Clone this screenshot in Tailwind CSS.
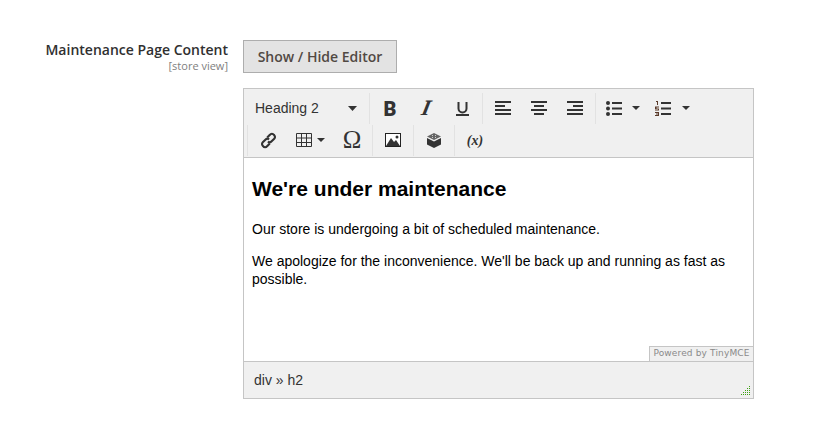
<!DOCTYPE html>
<html><head><meta charset="utf-8">
<script src="https://cdn.jsdelivr.net/npm/@tailwindcss/browser@4"></script>
</head>
<body class="bg-white w-[817px] h-[425px] overflow-hidden font-['Liberation_Sans',sans-serif]">
<div class="flex pt-[40px]">
  <div class="w-[228px] text-right pt-[1px] font-['Open_Sans',sans-serif]">
    <div class="text-[14px] leading-[17px] font-semibold text-[#303030]">Maintenance Page Content</div>
    <div class="mt-[2px] text-[11px] leading-[11px] text-[#808080]">[store view]</div>
  </div>
  <div class="ml-[15px] w-[511px]">
    <button class="block w-[154px] h-[33px] bg-[#e3e3e3] border border-[#adadad] text-[14px] font-semibold text-[#514943] font-['Open_Sans',sans-serif]">Show / Hide Editor</button>
    <div class="mt-[15px] h-[311px] border border-[#c5c5c5] flex flex-col bg-white">
      <div class="h-[69px] bg-[#f0f0f0] border-b border-[#c5c5c5] text-[#333]">
        <div class="h-[35px] pt-[3px] flex items-center">
          <div class="w-[125px] h-[30px] flex items-center justify-between pl-[11px] pr-[12px] text-[14px] text-[#333]"><span>Heading 2</span><svg width="9" height="5"><path d="M0 0h9L4.500 5z" fill="#333"/></svg></div>
          <div class="w-px h-[31px] bg-[#e2e2e2]"></div>
          <div class="flex ml-[2px]">
            <div class="w-[36px] h-[30px] flex items-center justify-center pt-[2px] text-[20px] leading-none font-black font-['Roboto',sans-serif]">B</div>
            <div class="w-[36px] h-[30px] flex items-center justify-center pb-[1px] text-[22px] leading-none font-bold italic font-['Liberation_Serif',serif]"><span class="inline-block -skew-x-12">I</span></div>
            <div class="w-[36px] h-[30px] flex items-center justify-center"><svg class="mt-[1px]" width="13" height="14" fill="none" stroke="#333"><path d="M2.500 0v6.500a4 4 0 0 0 8 0V0" stroke-width="2"/><path d="M0 13h13" stroke-width="2"/></svg></div>
          </div>
          <div class="w-px h-[31px] bg-[#e2e2e2] ml-[2px]"></div>
          <div class="flex ml-[2px]">
            <div class="w-[36px] h-[30px] flex items-center justify-center"><svg width="16" height="14" fill="#333"><path d="M0 0h16v2H0zM0 4h10v2H0zM0 8h16v2H0zM0 12h16v2H0z"/></svg></div>
            <div class="w-[36px] h-[30px] flex items-center justify-center"><svg width="16" height="14" fill="#333"><path d="M0 0h16v2H0zM3 4h10v2H3zM0 8h16v2H0zM3 12h10v2H3z"/></svg></div>
            <div class="w-[36px] h-[30px] flex items-center justify-center"><svg width="16" height="14" fill="#333"><path d="M0 0h16v2H0zM6 4h10v2H6zM0 8h16v2H0zM0 12h16v2H0z"/></svg></div>
          </div>
          <div class="w-px h-[31px] bg-[#e2e2e2] ml-[2px]"></div>
          <div class="flex items-center ml-[10px]">
            <svg width="16" height="15" fill="#333"><circle cx="2" cy="2" r="2"/><circle cx="2" cy="7.500" r="2"/><circle cx="2" cy="13" r="2"/><path d="M6 1h10v2H6zM6 6.500h10v2H6zM6 12h10v2H6z"/></svg>
            <svg class="ml-[10px]" width="8" height="4"><path d="M0 0h8L4 4z" fill="#333"/></svg>
            <svg class="ml-[15px]" width="16" height="15" fill="#333"><path d="M6 1h10v2H6zM6 6.500h10v2H6zM6 12h10v2H6z"/><path d="M1 0h2v4H2V1H1zM0 5.500h4v1H1.500v1H4v2H0v-1h3v-.500H0zM0 11h4v4H0v-1h3v-.500H1v-1h2V12H0z" fill="#5a3a2a"/></svg>
            <svg class="ml-[11px]" width="8" height="4"><path d="M0 0h8L4 4z" fill="#333"/></svg>
          </div>
        </div>
        <div class="h-[33px] pb-[1px] flex items-center pl-[3px]">
          <div class="w-px h-[31px] bg-[#e2e2e2]"></div>
          <div class="w-[38px] ml-[2px] h-[30px] flex items-center justify-center pr-[2px]"><svg width="17" height="17" viewBox="0 0 16 16" fill="none" stroke="#333" stroke-width="2"><path d="M6.800 5.200 9.300 2.700a2.300 2.300 0 0 1 3.800 0l.3.300a2.300 2.300 0 0 1 0 3.300L10.700 9a2.300 2.300 0 0 1-3.200 0"/><path d="M9.200 10.800 6.700 13.300a2.300 2.300 0 0 1-3.800 0l-.3-.3a2.300 2.300 0 0 1 0-3.300L5.300 7a2.300 2.300 0 0 1 3.200 0"/></svg></div>
          <div class="w-[46px] flex items-center h-[30px] pl-[8px]"><svg width="16" height="14" fill="none" stroke="#333"><path d="M.5.500h15v13H.500zM.5 5h15M.5 9.500h15M5.500.500v13M10.500.500v13"/></svg><svg class="ml-[5px]" width="8" height="4"><path d="M0 0h8L4 4z" fill="#333"/></svg></div>
          <div class="w-[36px] h-[30px] flex items-center justify-center text-[25px] font-['Liberation_Serif',serif]">Ω</div>
          <div class="w-px h-[31px] bg-[#e2e2e2] ml-[2px]"></div>
          <div class="w-[36px] h-[30px] ml-[2px] flex items-center justify-center"><svg width="16" height="14"><rect x=".5" y=".5" width="15" height="13" fill="#fff" stroke="#222"/><path d="M1 13 6 5l3 4 2-2 4 6z" fill="#333"/><circle cx="12" cy="4" r="1.500" fill="#333"/></svg></div>
          <div class="w-px h-[31px] bg-[#e2e2e2] ml-[2px]"></div>
          <div class="w-[36px] h-[30px] ml-[2px] flex items-center justify-center"><svg width="14" height="15" fill="#333"><path d="M7 0l7 3.500L7 7 0 3.500z" fill="#666"/><path d="M5 2h1v1H5zM8 2h1v1H8zM5 4h1v1H5zM8 4h1v1H8z" fill="#ccc"/><path d="M0 5v6.500L7 15l7-3.500V5L7 8.500z"/></svg></div>
          <div class="w-px h-[31px] bg-[#e2e2e2] ml-[2px]"></div>
          <div class="w-[36px] h-[30px] ml-[2px] flex items-center justify-center text-[14px] font-bold italic font-['Liberation_Serif',serif]">(x)</div>
        </div>
      </div>
      <div class="relative h-[203px] pl-[8px] pt-[19px] pr-[8px] text-[14px] leading-[18px] text-black">
        <h2 class="text-[21px] leading-[24px] font-bold">We're under maintenance</h2>
        <p class="mt-[19px]">Our store is undergoing a bit of scheduled maintenance.</p>
        <p class="mt-[14px]">We apologize for the inconvenience. We'll be back up and running as fast as possible.</p>
        <div class="absolute right-0 bottom-0 h-[15px] w-[104px] bg-[#f0f0f0] border-t border-l border-[#c5c5c5] text-[9px] tracking-[0.15px] leading-[13px] text-center text-[#8a8a8a] font-['DejaVu_Sans',sans-serif]">Powered by TinyMCE</div>
      </div>
      <div class="relative flex-1 bg-[#f0f0f0] border-t border-[#c5c5c5] pl-[10px] pt-[1px] flex items-center text-[14px] text-[#333]">div » h2
        <svg class="absolute right-[2px] bottom-[2px]" width="10" height="10" fill="#3fa015"><path d="M8 0h1v1H8zM8 2h1v1H8zM6 2h1v1H6zM8 4h1v1H8zM6 4h1v1H6zM4 4h1v1H4zM8 6h1v1H8zM6 6h1v1H6zM4 6h1v1H4zM2 6h1v1H2zM8 8h1v1H8zM6 8h1v1H6zM4 8h1v1H4zM2 8h1v1H2zM0 8h1v1H0z"/></svg>
      </div>
    </div>
  </div>
</div>
</body></html>
